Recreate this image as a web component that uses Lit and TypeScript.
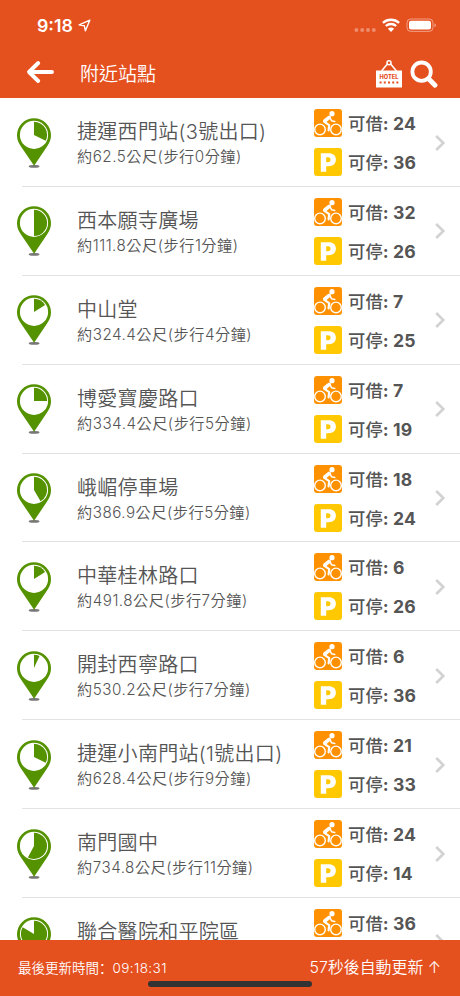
import { LitElement, html, svg, css } from "lit";
import { customElement, property } from "lit/decorators.js";

interface Station {
  name: string;
  distance: string;
  bikes: number;
  docks: number;
  angle: number;
}

const stations: Station[] = [
  { name: "捷運西門站(3號出口)", distance: "約62.5公尺(步行0分鐘)", bikes: 24, docks: 36, angle: 117 },
  { name: "西本願寺廣場", distance: "約111.8公尺(步行1分鐘)", bikes: 32, docks: 26, angle: 180 },
  { name: "中山堂", distance: "約324.4公尺(步行4分鐘)", bikes: 7, docks: 25, angle: 58 },
  { name: "博愛寶慶路口", distance: "約334.4公尺(步行5分鐘)", bikes: 7, docks: 19, angle: 90 },
  { name: "峨嵋停車場", distance: "約386.9公尺(步行5分鐘)", bikes: 18, docks: 24, angle: 150 },
  { name: "中華桂林路口", distance: "約491.8公尺(步行7分鐘)", bikes: 6, docks: 26, angle: 58 },
  { name: "開封西寧路口", distance: "約530.2公尺(步行7分鐘)", bikes: 6, docks: 36, angle: 25 },
  { name: "捷運小南門站(1號出口)", distance: "約628.4公尺(步行9分鐘)", bikes: 21, docks: 33, angle: 117 },
  { name: "南門國中", distance: "約734.8公尺(步行11分鐘)", bikes: 24, docks: 14, angle: 208 },
  { name: "聯合醫院和平院區", distance: "約745.1公尺(步行11分鐘)", bikes: 36, docks: 12, angle: 300 },
];

function slice(cx: number, cy: number, r: number, angle: number): string {
  const a = (angle * Math.PI) / 180;
  const x = cx + r * Math.sin(a);
  const y = cy - r * Math.cos(a);
  return `M${cx} ${cy}V${cy - r}A${r} ${r} 0 ${angle > 180 ? 1 : 0} 1 ${x.toFixed(2)} ${y.toFixed(2)}Z`;
}

@customElement("station-row")
export class StationRow extends LitElement {
  @property({ attribute: false }) station!: Station;

  static styles = css`
    :host {
      display: block;
      flex: none;
      height: 88.88px;
      box-sizing: border-box;
      color: #555;
    }
    .row {
      display: flex;
      height: 100%;
      padding-left: 16px;
      box-sizing: border-box;
    }
    .pin {
      flex: none;
      width: 36px;
      height: 52px;
      margin-top: 18.5px;
    }
    .text {
      width: 237px;
      margin-left: 25px;
      padding-top: 20px;
      box-sizing: border-box;
      white-space: nowrap;
      font-weight: 350;
    }
    .name {
      height: 28px;
      line-height: 28px;
      font-size: 20px;
      letter-spacing: 0.3px;
    }
    .distance {
      height: 22px;
      line-height: 22px;
      font-size: 15.2px;
      letter-spacing: 0.5px;
    }
    .counts {
      display: flex;
      flex-direction: column;
      gap: 11px;
      padding-top: 11px;
      width: 120px;
    }
    .count {
      display: flex;
      align-items: center;
      gap: 6px;
      height: 28px;
      font-size: 17.3px;
      line-height: 28px;
      font-weight: 500;
      letter-spacing: 0.1px;
      white-space: nowrap;
    }
    .count svg {
      flex: none;
      width: 28px;
      height: 28px;
    }
    .count span {
      padding-top: 2px;
    }
    .count b {
      font-weight: 650;
      font-size: 17.6px;
    }
    .chevron {
      width: 12px;
      height: 18px;
      margin-top: 35.5px;
    }
    .rule {
      height: 1px;
      margin: -1px 0 0 22px;
      background: #e2e2e2;
    }
  `;

  render() {
    const s = this.station;
    return html`
      <div class="row">
        <svg class="pin" viewBox="0 0 36 52">
          <ellipse cx="18.1" cy="49.4" rx="5.4" ry="1.4" fill="#777" />
          <path d="M18 1.2A17 17 0 0 0 1 18.2C1 22.6 2.6 26 4.8 29.3L18.1 48.8L31.2 29.3C33.4 26 35 22.6 35 18.2A17 17 0 0 0 18 1.2Z" fill="#559200" />
          <circle cx="18" cy="17.9" r="14.1" fill="#fff" />
          ${svg`<path d=${slice(18, 17.9, 13.1, s.angle)} fill="#559200" />`}
        </svg>
        <div class="text">
          <div class="name">${s.name}</div>
          <div class="distance">${s.distance}</div>
        </div>
        <div class="counts">
          <div class="count">
            <svg viewBox="0 0 28 28">
              <rect width="28" height="28" rx="3" fill="#ff9100" />
              <g fill="none" stroke="#fff" stroke-linecap="round" stroke-linejoin="round">
                <circle cx="6" cy="20.4" r="5.3" stroke-width="1.4" />
                <circle cx="22" cy="20.4" r="5.3" stroke-width="1.4" />
                <path d="M15.2 8.4L10.8 12" stroke-width="3.6" />
                <path d="M10.4 12.9L15.2 16.2L14.6 21.4" stroke-width="2.2" />
                <path d="M16 8.6L17.6 11.8L20.8 12.4" stroke-width="1.5" />
              </g>
              <circle cx="18" cy="4.7" r="2.6" fill="#fff" />
            </svg>
            <span>可借<b>: ${s.bikes}</b></span>
          </div>
          <div class="count">
            <svg viewBox="0 0 28 28">
              <rect width="28" height="28" rx="3" fill="#ffc800" />
              <path fill="#fff" fill-rule="evenodd" d="M6.8 5.2H14.6C19.2 5.2 21.9 7.6 21.9 11.6C21.9 15.9 19 18.2 14.6 18.2H12.2V23.8H6.8ZM12.2 9.3V14.2H13.8C15.5 14.2 16.5 13.4 16.5 11.7C16.5 10.1 15.5 9.3 13.8 9.3Z" />
            </svg>
            <span>可停<b>: ${s.docks}</b></span>
          </div>
        </div>
        <svg class="chevron" viewBox="0 0 12 18">
          <path d="M2.2 2L9.3 9L2.2 16" fill="none" stroke="#d2d2d2" stroke-width="2.6" />
        </svg>
      </div>
      <div class="rule"></div>
    `;
  }
}

@customElement("app-root")
export class AppRoot extends LitElement {
  static styles = css`
    :host {
      display: flex;
      flex-direction: column;
      width: 460px;
      height: 996px;
      overflow: hidden;
      background: #fff;
      font-family: Inter, "Noto Sans CJK TC", sans-serif;
    }
    header {
      flex: none;
      height: 98px;
      background: #e5501f;
      color: #fff;
    }
    .status {
      display: flex;
      align-items: center;
      height: 50px;
      padding: 0 24px 0 37px;
    }
    .time {
      font-size: 17.8px;
      font-weight: 600;
      margin-right: 5px;
    }
    .system {
      margin-left: auto;
      width: 82px;
      height: 16px;
    }
    .bar {
      display: flex;
      align-items: center;
      height: 48px;
      padding: 0 22px 0 26px;
    }
    .back {
      width: 29px;
      height: 24px;
      margin-top: -4px;
    }
    h1 {
      margin: 2px auto 0 25px;
      font-size: 19px;
      line-height: 28px;
      font-weight: 350;
    }
    .hotel {
      width: 26px;
      height: 28px;
    }
    .search {
      width: 28px;
      height: 28px;
      margin-left: 8px;
    }
    main {
      flex: 1;
      min-height: 0;
      overflow: hidden;
      display: flex;
      flex-direction: column;
    }
    footer {
      position: relative;
      flex: none;
      display: flex;
      justify-content: space-between;
      align-items: center;
      height: 56px;
      padding: 0 20px 0 18px;
      box-sizing: border-box;
      background: #e5501f;
      color: #fff;
      white-space: nowrap;
    }
    .updated {
      font-family: Inter, "Noto Sans CJK SC", sans-serif;
      font-size: 13.5px;
      line-height: 20px;
      font-weight: 350;
    }
    .clock {
      letter-spacing: 0.4px;
    }
    .next {
      font-size: 15.9px;
      line-height: 24px;
      font-weight: 350;
      margin-right: -1px;
    }
    .home {
      position: absolute;
      left: 148px;
      bottom: 9px;
      width: 164px;
      height: 6px;
      border-radius: 3px;
      background: #333;
    }
  `;

  render() {
    return html`
      <header>
        <div class="status">
          <span class="time">9:18</span>
          <svg width="13" height="13" viewBox="0 0 13 13">
            <path d="M11.8 1.2L1.2 5.9L6.3 6.7L7.4 11.8Z" fill="none" stroke="#fff" stroke-width="1.4" stroke-linejoin="round" />
          </svg>
          <svg class="system" viewBox="0 0 82 16">
            <g fill="#fff" fill-opacity=".35">
              <circle cx="2.4" cy="13" r="2" /><circle cx="8.2" cy="13" r="2" />
              <circle cx="14" cy="13" r="2" /><circle cx="19.8" cy="13" r="2" />
            </g>
            <g fill="none" stroke="#fff" stroke-width="2.3">
              <path d="M28.9 5.9A12 12 0 0 1 45.1 5.9" />
              <path d="M31.8 9A7.8 7.8 0 0 1 42.2 9" />
            </g>
            <path d="M37 15L33.9 11.7A4.4 4.4 0 0 1 40.1 11.7Z" fill="#fff" />
            <rect x="53" y="2" width="26" height="12.4" rx="3.8" fill="none" stroke="#fff" stroke-opacity=".45" />
            <rect x="55" y="3.8" width="22" height="8.8" rx="2" fill="#fff" />
            <path d="M80.5 6.2V10.2Q81.8 9.6 81.8 8.2Q81.8 6.8 80.5 6.2Z" fill="#fff" fill-opacity=".5" />
          </svg>
        </div>
        <div class="bar">
          <svg class="back" viewBox="0 0 29 24">
            <path d="M26 12H3.2M12.2 3L3 12L12.2 21" fill="none" stroke="#fff" stroke-width="3.9" stroke-linecap="round" stroke-linejoin="round" />
          </svg>
          <h1>附近站點</h1>
          <svg class="hotel" viewBox="0 0 26 28">
            <path d="M5.5 11L11.6 3.8M20.5 11L14.4 3.8" stroke="#fff" stroke-width="1.5" />
            <circle cx="13" cy="2.8" r="2" fill="none" stroke="#fff" stroke-width="1.5" />
            <rect x="0" y="10.5" width="26" height="17" fill="#fff" />
            <text x="13" y="18.9" text-anchor="middle" textLength="19" lengthAdjust="spacingAndGlyphs" font-size="6" font-weight="800" fill="#e5501f">HOTEL</text>
            <path d="M3.6 22.5H22.4" stroke="#e5501f" stroke-width="2" stroke-dasharray="2 2.2" />
          </svg>
          <svg class="search" viewBox="0 0 28 28">
            <circle cx="11.6" cy="11.7" r="9.2" fill="none" stroke="#fff" stroke-width="3.8" />
            <path d="M18.6 18.7L25 25.2" stroke="#fff" stroke-width="4.8" stroke-linecap="round" />
          </svg>
        </div>
      </header>
      <main>${stations.map((s) => html`<station-row .station=${s}></station-row>`)}</main>
      <footer>
        <span class="updated">最後更新時間：<span class="clock">09:18:31</span></span>
        <span class="next">57秒後自動更新 ↑</span>
        <div class="home"></div>
      </footer>
    `;
  }
}
